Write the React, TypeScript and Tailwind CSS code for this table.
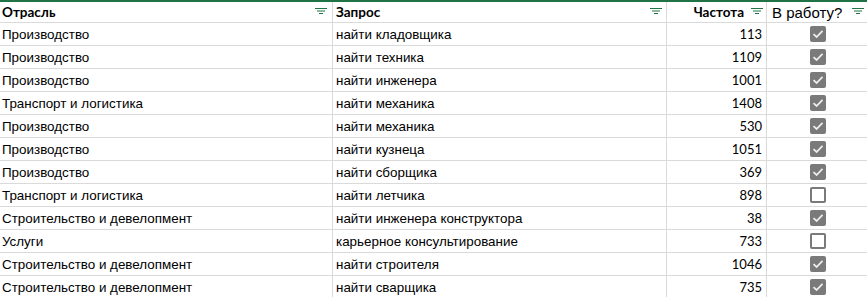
import React from "react";

const rows: [string, string, number, boolean][] = [
  ["Производство", "найти кладовщика", 113, true],
  ["Производство", "найти техника", 1109, true],
  ["Производство", "найти инженера", 1001, true],
  ["Транспорт и логистика", "найти механика", 1408, true],
  ["Производство", "найти механика", 530, true],
  ["Производство", "найти кузнеца", 1051, true],
  ["Производство", "найти сборщика", 369, true],
  ["Транспорт и логистика", "найти летчика", 898, false],
  ["Строительство и девелопмент", "найти инженера конструктора", 38, true],
  ["Услуги", "карьерное консультирование", 733, false],
  ["Строительство и девелопмент", "найти строителя", 1046, true],
  ["Строительство и девелопмент", "найти сварщика", 735, true],
];

function FilterIcon() {
  return (
    <svg width="12" height="6" viewBox="0 0 12 6" className="shrink-0 self-center">
      <line x1="0" y1="0.5" x2="12" y2="0.5" stroke="#217346" strokeWidth="1" />
      <line x1="2" y1="3" x2="10" y2="3" stroke="#217346" strokeWidth="1" />
      <line x1="4" y1="5.5" x2="8" y2="5.5" stroke="#217346" strokeWidth="1" />
    </svg>
  );
}

function Checkbox({ checked }: { checked: boolean }) {
  if (!checked) {
    return <div className="w-4 h-4 rounded-[2px] border-2 border-[#7a7a7a] bg-white" />;
  }
  return (
    <div className="w-4 h-4 rounded-[2px] bg-[#7a7a7a] flex items-center justify-center">
      <svg width="12" height="10" viewBox="0 0 12 10">
        <path d="M1.5 5.2 L4.6 8 L10.5 1.8" fill="none" stroke="#ededed" strokeWidth="1.8" />
      </svg>
    </div>
  );
}

export default function App() {
  const body = { fontFamily: '"Liberation Sans", Arial, sans-serif' };
  const cal = { fontFamily: 'Lato, "Liberation Sans", sans-serif' };
  return (
    <div className="w-[867px] h-[297px] overflow-hidden bg-white text-black border-t-2 border-[#217346]">
      <div className="grid grid-cols-[333px_334px_100px_100px] h-[21px] border-b border-[#dadada] leading-[15px]">
        <div className="flex items-end justify-between pl-[2px] pr-[5px] pb-[2px] border-r border-[#dadada] font-bold text-[13.5px]" style={cal}>
          <span>Отрасль</span>
          <FilterIcon />
        </div>
        <div className="flex items-end justify-between pl-[3px] pr-[4px] pb-[2px] border-r border-[#dadada] font-bold text-[13.5px]" style={cal}>
          <span>Запрос</span>
          <FilterIcon />
        </div>
        <div className="flex items-end justify-end gap-[7px] pr-[3px] pb-[2px] border-r border-[#dadada] font-bold text-[13.5px]" style={cal}>
          <span>Частота</span>
          <FilterIcon />
        </div>
        <div className="flex items-end justify-between pl-[5px] pr-[3px] pb-[2px] text-[15px]" style={body}>
          <span>В работу?</span>
          <FilterIcon />
        </div>
      </div>
      {rows.map(([a, b, n, c], i) => (
        <div key={i} className="grid grid-cols-[333px_334px_100px_100px] h-[23px] border-b border-[#dadada] text-[13.4px] leading-[15px]">
          <div className="flex items-end pl-[2px] pb-[3px] border-r border-[#dadada]" style={body}>{a}</div>
          <div className="flex items-end pl-[3px] pb-[3px] border-r border-[#dadada]" style={body}>{b}</div>
          <div className="flex items-end justify-end pr-[4px] pb-[3px] border-r border-[#dadada] text-[13px]" style={cal}>{n}</div>
          <div className="flex items-center justify-center pl-[2px]"><Checkbox checked={c} /></div>
        </div>
      ))}
    </div>
  );
}
